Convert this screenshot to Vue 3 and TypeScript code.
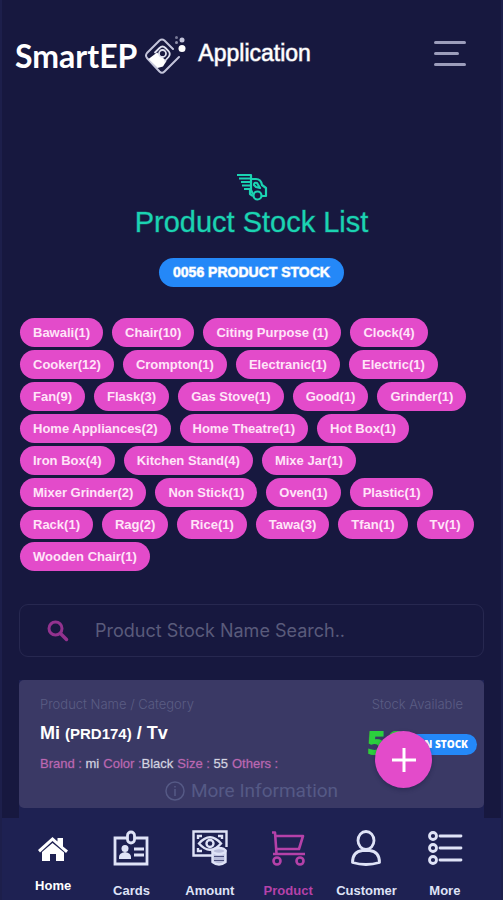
<script setup lang="ts">
import { ref } from 'vue'

interface Category {
  name: string
  count: number
}

interface NavItem {
  label: string
  icon: string
}

const categories: Category[] = [
  { name: 'Bawali', count: 1 },
  { name: 'Chair', count: 10 },
  { name: 'Citing Purpose ', count: 1 },
  { name: 'Clock', count: 4 },
  { name: 'Cooker', count: 12 },
  { name: 'Crompton', count: 1 },
  { name: 'Electranic', count: 1 },
  { name: 'Electric', count: 1 },
  { name: 'Fan', count: 9 },
  { name: 'Flask', count: 3 },
  { name: 'Gas Stove', count: 1 },
  { name: 'Good', count: 1 },
  { name: 'Grinder', count: 1 },
  { name: 'Home Appliances', count: 2 },
  { name: 'Home Theatre', count: 1 },
  { name: 'Hot Box', count: 1 },
  { name: 'Iron Box', count: 4 },
  { name: 'Kitchen Stand', count: 4 },
  { name: 'Mixe Jar', count: 1 },
  { name: 'Mixer Grinder', count: 2 },
  { name: 'Non Stick', count: 1 },
  { name: 'Oven', count: 1 },
  { name: 'Plastic', count: 1 },
  { name: 'Rack', count: 1 },
  { name: 'Rag', count: 2 },
  { name: 'Rice', count: 1 },
  { name: 'Tawa', count: 3 },
  { name: 'Tfan', count: 1 },
  { name: 'Tv', count: 1 },
  { name: 'Wooden Chair', count: 1 },
]

const navItems: NavItem[] = [
  { label: 'Home', icon: 'home' },
  { label: 'Cards', icon: 'cards' },
  { label: 'Amount', icon: 'amount' },
  { label: 'Product', icon: 'product' },
  { label: 'Customer', icon: 'customer' },
  { label: 'More', icon: 'more' },
]

const active = ref('Product')
const search = ref('')
</script>

<template>
  <div class="page">
    <header class="top">
      <a class="brand" href="#">
        <span class="brand-name">SmartEP</span>
        <svg class="brand-mark" viewBox="0 0 42 42" fill="none">
          <path d="M29 14 20.500 5.500Q18 3.500 15.500 5.500L3 18Q1 20.500 3 23L15.500 36.500Q18 39 20.500 36.500L35 22" stroke="#c3c4da" stroke-width="2" stroke-linecap="round" />
          <path d="M4.500 24 13 17.500 22.500 26 19 31.500 13.500 33Z" fill="#fff" />
          <path d="m10.500 18 5-5q3-3 6 0l3 3q2.500 3 0 6l-4 4.500" stroke="#dfe0ee" stroke-width="1.800" />
          <circle cx="18.500" cy="18.500" r="3.500" fill="#191a40" stroke="#dfe0ee" stroke-width="1.800" />
          <circle cx="38" cy="13.500" r="3.500" fill="#fff" />
          <circle cx="38" cy="5" r="2.500" fill="#c3c4da" />
          <circle cx="32.500" cy="2.500" r="1.500" fill="#777896" />
          <circle cx="32.500" cy="7.500" r="1.500" fill="#9293ad" />
        </svg>
        <span class="brand-sub">Application</span>
      </a>
      <button class="menu" type="button" aria-label="Menu">
        <span></span><span class="short"></span><span></span>
      </button>
    </header>

    <main>
      <section class="intro">
        <svg class="truck" viewBox="0 0 32 28" fill="none" stroke="#1bd3b2" stroke-width="2.200" stroke-linejoin="round">
          <path d="M1 2h14v15l2 4M3 5.500h11M5 9h9M6 12.500h8M8 16h6" />
          <path d="M15 6h5q5 0 6 6l4 3v8h-4M14 17v4l3 2" />
          <path d="M18 12q0-3 3-2l3 5-4-1Z" />
          <circle cx="21.500" cy="22.500" r="4" />
        </svg>
        <h1>Product Stock List</h1>
        <span class="total">0056 PRODUCT STOCK</span>
      </section>

      <div class="chips">
        <button v-for="c in categories" :key="c.name" class="chip" type="button">{{ c.name }}({{ c.count }})</button>
      </div>

      <label class="search">
        <svg viewBox="0 0 22 22" fill="none" stroke="#93328f" stroke-linecap="round">
          <circle cx="8.500" cy="8.500" r="6.500" stroke-width="3" />
          <path d="m13.500 13.500 6 6" stroke-width="3.500" />
        </svg>
        <input v-model="search" type="text" placeholder="Product Stock Name Search.." aria-label="Product Stock Name Search" />
      </label>

      <div class="list">
        <article class="card">
          <div class="row captions">
            <span>Product Name / Category</span>
            <span>Stock Available</span>
          </div>
          <div class="row">
            <div>
              <h2>Mi <small>(PRD174)</small> / Tv</h2>
              <p class="specs">
                <span><b>Brand :</b> mi</span>
                <span><b>Color :</b>Black</span>
                <span><b>Size :</b> 55</span>
                <span><b>Others :</b></span>
              </p>
            </div>
            <div class="stock">
              <strong>50</strong>
              <span class="status">IN STOCK</span>
            </div>
          </div>
          <a class="more-info" href="#">
            <svg viewBox="0 0 20 20" fill="none" stroke="#555985" stroke-width="1.500">
              <circle cx="10" cy="10" r="9" />
              <path d="M10 5v1.500M10 8v7" />
            </svg>
            More Information
          </a>
          <button class="add" type="button" aria-label="Add product">
            <svg viewBox="0 0 24 24" stroke="#fff" stroke-width="3"><path d="M12 0v24M0 12h24" /></svg>
          </button>
        </article>
      </div>
    </main>

    <nav class="tabs">
      <a
        v-for="item in navItems"
        :key="item.label"
        href="#"
        :class="['tab', item.icon, { active: active === item.label }]"
        @click.prevent="active = item.label"
      >
        <svg v-if="item.icon === 'home'" viewBox="0 0 36 36" fill="currentColor">
          <path d="M3 20 17.500 7l5 4.500V8H28v8.500l5 4-2 2.500L17.500 11 5 22.500Z" />
          <path d="m7 22 10.500-9L29 22.500V31h-8v-7h-6v7H7Z" />
        </svg>
        <svg v-else-if="item.icon === 'cards'" viewBox="0 0 36 36" fill="none" stroke="currentColor" stroke-width="2.800">
          <path d="M14 8H2v26h32V8H22" />
          <rect x="14.500" y="2" width="7" height="11" rx="3.500" />
          <circle cx="12" cy="18.500" r="3.500" fill="currentColor" stroke="none" />
          <path d="M6 29v-2q0-4 6-5 6 1 6 5v2Z" fill="currentColor" stroke="none" />
          <path d="M21 19h10M21 25h10" />
        </svg>
        <svg v-else-if="item.icon === 'amount'" viewBox="0 0 36 36" fill="none" stroke="currentColor" stroke-width="2.400">
          <path d="M20 25.500H1.500v-24h33V17" />
          <path d="M6 9V6h4M26 6h4v3M6 18v3h4" />
          <path d="M7 13.500Q18 1 29 13.500 18 26 7 13.500Z" />
          <circle cx="18" cy="13.500" r="3.500" />
          <g fill="#b9bddb">
            <path d="M20.500 21v11q6.500 5 13 0V21Z" />
            <ellipse cx="27" cy="21" rx="6.500" ry="3" />
          </g>
          <path d="M22 26.500h10M22 30.500h10" stroke="#4a4e7c" stroke-width="1" />
        </svg>
        <svg v-else-if="item.icon === 'product'" viewBox="0 0 36 36" fill="none" stroke="currentColor" stroke-width="2.600">
          <path d="M2 2.500h3l1.500 21M6 6h27l-4 13H7M3 24h32" stroke-linejoin="round" />
          <circle cx="7" cy="31" r="3.500" />
          <circle cx="30" cy="31" r="3.500" />
        </svg>
        <svg v-else-if="item.icon === 'customer'" viewBox="0 0 36 36" fill="none" stroke="currentColor" stroke-width="2.800">
          <ellipse cx="18" cy="10.500" rx="8" ry="9" />
          <path d="M4.500 32.500q0-11 10-12h7q10 1 10 12-13.500 4-27 0Z" stroke-linejoin="round" />
        </svg>
        <svg v-else viewBox="0 0 36 36" fill="none" stroke="currentColor" stroke-width="2.800">
          <circle cx="6" cy="6" r="3.500" />
          <circle cx="6" cy="18" r="3.500" />
          <circle cx="6" cy="30" r="3.500" />
          <path d="M13 6h21M13 18h21M13 30h21" stroke-linecap="round" />
        </svg>
        <span>{{ item.label }}</span>
      </a>
    </nav>
  </div>
</template>

<style>
body {
  background: #17183f;
}
</style>

<style scoped>
.page {
  box-sizing: border-box;
  min-height: 100vh;
  display: flex;
  flex-direction: column;
  background: #17183f;
  border: solid #1d1f4b;
  border-width: 0 2px;
  font-family: "Liberation Sans", Arial, sans-serif;
  color: #fff;
}
a {
  color: inherit;
  text-decoration: none;
}
button {
  font-family: inherit;
  border: 0;
  cursor: pointer;
}
.top {
  display: flex;
  align-items: center;
  justify-content: space-between;
  padding: 28px 35px 0 13px;
}
.brand {
  display: flex;
  align-items: center;
}
.brand-name {
  font: 700 32px/44px Lato, sans-serif;
  padding-top: 6px;
}
.brand-mark {
  width: 42px;
  height: 42px;
  margin: 6px 12px 0 7px;
}
.brand-sub {
  font-size: 23px;
  line-height: 44px;
  -webkit-text-stroke: 1px #ffffff99;
}
.menu {
  display: flex;
  flex-direction: column;
  gap: 8px;
  width: 32px;
  padding: 0;
  background: none;
}
.menu span {
  height: 3px;
  border-radius: 2px;
  background: #9c9dbb;
}
.menu .short {
  width: 25px;
}
.intro {
  display: flex;
  flex-direction: column;
  align-items: center;
  padding-top: 95px;
}
.truck {
  width: 32px;
  height: 28px;
}
h1 {
  margin: 4px 0 19px;
  font-size: 29px;
  line-height: 34px;
  font-weight: 400;
  color: #1bd3b2;
  -webkit-text-stroke: 1px #1bd3b255;
}
.total {
  padding: 0 14px;
  border-radius: 16px;
  background: #2488f8;
  font-size: 14px;
  line-height: 29px;
  font-weight: 700;
  -webkit-text-stroke: 1px #ffffff99;
}
.chips {
  display: flex;
  flex-wrap: wrap;
  gap: 3px 9px;
  padding: 31px 16px 0 18px;
}
.chip {
  height: 29px;
  padding: 0 13px;
  border-radius: 15px;
  background: #e34bca;
  color: #ffe4f8;
  font-size: 13px;
  font-weight: 700;
  line-height: 28px;
  white-space: pre;
}
.search {
  display: flex;
  align-items: center;
  gap: 26px;
  height: 51px;
  margin: 33px 17px 0;
  padding: 0 27px;
  border: 1px solid #272850;
  border-radius: 9px;
}
.search svg {
  width: 22px;
  height: 22px;
  flex: none;
}
.search input {
  flex: 1;
  min-width: 0;
  padding: 0;
  border: 0;
  outline: 0;
  background: none;
  color: #c9cae0;
  font: 400 18px/24px Inter, sans-serif;
}
.search input::placeholder {
  color: #5a5b7b;
  opacity: 1;
}
.list {
  margin: 23px 17px 0;
  padding-bottom: 10px;
  background: #1e2152;
}
.card {
  position: relative;
  padding: 15px 21px 4px;
  border-radius: 5px;
  background: #3a3965;
}
.row {
  display: flex;
  justify-content: space-between;
}
.captions {
  font: 300 13px/18px Inter, sans-serif;
  color: #5b5d84;
}
h2 {
  margin: 8px 0 0;
  font-size: 18px;
  line-height: 24px;
  font-weight: 700;
}
h2 small {
  font-size: 15px;
}
.specs {
  display: flex;
  gap: 4px;
  margin: 10px 0 0;
  font-size: 13px;
  line-height: 16px;
  color: #d5d5e2;
  -webkit-text-stroke: 1px #d5d5e244;
}
.specs b {
  font-weight: 400;
  color: #bd68b3;
  -webkit-text-stroke: 1px #bd68b344;
}
.stock {
  display: flex;
  align-items: flex-start;
  margin-right: -14px;
}
.stock strong {
  margin-top: 9px;
  font: 800 34px/40px "Open Sans", sans-serif;
  color: #2bcf3d;
}
.status {
  margin-top: 21px;
  padding: 0 9px 0 14px;
  border-radius: 11px;
  background: #2488f8;
  font: 800 10px/21px "Open Sans", sans-serif;
}
.more-info {
  display: flex;
  align-items: center;
  justify-content: center;
  gap: 6px;
  margin-top: 6px;
  font: 400 19px/26px Roboto, sans-serif;
  color: #555985;
}
.more-info svg {
  width: 20px;
  height: 20px;
}
.add {
  position: absolute;
  right: 52px;
  top: 51px;
  width: 57px;
  height: 57px;
  padding: 0;
  display: grid;
  place-items: center;
  border-radius: 50%;
  background: #e34bca;
  box-shadow: 0 2px 4px #17183f66;
}
.add svg {
  width: 24px;
  height: 24px;
}
.tabs {
  flex: 1;
  display: grid;
  grid-template-columns: repeat(6, 1fr);
  padding: 12px 17px 0 12px;
  background: #1e2152;
}
.tab {
  display: flex;
  flex-direction: column;
  align-items: center;
  gap: 17px;
  color: #dfe3f7;
  font-size: 13px;
  line-height: 16px;
  font-weight: 700;
}
.tab svg {
  width: 36px;
  height: 36px;
}
.home {
  gap: 12px;
  color: #fff;
}
.active {
  color: #b541a9;
}
</style>
